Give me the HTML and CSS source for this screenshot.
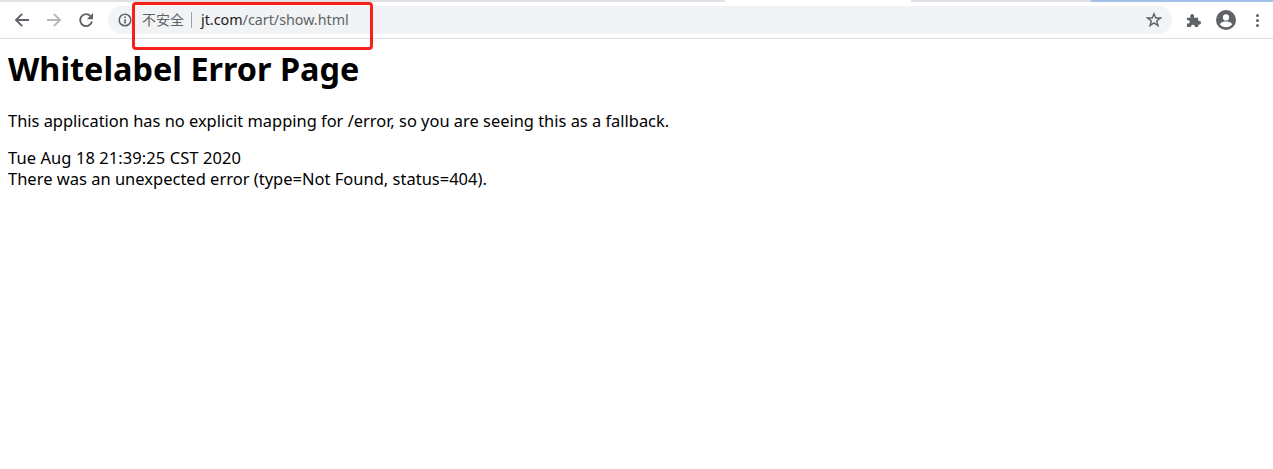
FILE: index.html
```html
<!DOCTYPE html>
<html lang="zh-CN">
<head>
    <meta charset="UTF-8">
    <title>Whitelabel Error Page</title>
    <link rel="stylesheet" href="styles.css">
</head>

<body>
    <div class="tab-strip">
        <div class="tab-grey tab-left"></div>
        <div class="tab-active"></div>
        <div class="tab-grey tab-mid"></div>
        <div class="tab-blue"></div>
    </div>

    <header class="toolbar">
        <div class="nav-buttons">
            <svg class="icon" viewBox="0 0 16 16"><path d="M15 8H2M8.2 1.8L2 8L8.2 14.2" fill="none" stroke="#5f6368" stroke-width="1.9"/></svg>
            <svg class="icon" viewBox="0 0 16 16"><path d="M1 8H14M7.8 1.8L14 8L7.8 14.2" fill="none" stroke="#b4b6b9" stroke-width="1.9"/></svg>
            <svg class="icon" viewBox="0 0 16 16"><path d="M14 9.4A6 6 0 1 1 12.4 3.9" fill="none" stroke="#5f6368" stroke-width="1.9"/><path d="M15 1V7.2H8.8Z" fill="#5f6368"/></svg>
        </div>

        <div class="omnibox">
            <svg class="info-icon" viewBox="0 0 14 14">
                <circle cx="7" cy="7" r="5.8" fill="none" stroke="#5f6368" stroke-width="1.5"/>
                <path d="M7 6.2V10.4M7 3.4V5" stroke="#5f6368" stroke-width="1.6"/>
            </svg>
            <span class="security-label">不安全</span>
            <span class="divider"></span>
            <span class="url"><span class="host">jt.com</span>/cart/show.html</span>
            <svg class="star-icon" viewBox="0 0 16 16"><path d="M8 1.8L9.8 6H14.4L10.7 8.9L12 13.6L8 10.9L4 13.6L5.3 8.9L1.6 6H6.2Z" fill="none" stroke="#5f6368" stroke-width="1.4"/></svg>
        </div>

        <div class="extra-buttons">
            <svg class="puzzle-icon" viewBox="0 0 16 16"><path d="M1 5H4.6C4.2 2.6 5 1 6.6 1S9 2.6 8.6 5H13V8.4C15 8 16 9 16 10.4S15 12.8 13 12.4V15H9.4C9.8 13.4 9 12.4 7.4 12.4S5 13.4 5.4 15H1V11.2C3 11.6 4 10.8 4 9.4S3 7.4 1 7.8Z" fill="#5f6368"/></svg>
            <svg class="avatar-icon" viewBox="0 0 20 20">
                <circle cx="10" cy="10" r="10" fill="#5f6368"/>
                <circle cx="10" cy="7.4" r="3.1" fill="#fff"/>
                <path d="M3.8 14.2C5.2 12 8 11.6 10 11.6S14.8 12 16.2 14.2C14.8 16.2 12.6 17.2 10 17.2S5.2 16.2 3.8 14.2Z" fill="#fff"/>
            </svg>
            <div class="menu-dots"><span></span><span></span><span></span></div>
        </div>
    </header>

    <main class="page">
        <h1>Whitelabel Error Page</h1>
        <p>This application has no explicit mapping for /error, so you are seeing this as a fallback.</p>
        <div class="timestamp">Tue Aug 18 21:39:25 CST 2020</div>
        <div>There was an unexpected error (type=Not Found, status=404).</div>
    </main>

    <div class="red-box"></div>
</body>
</html>
```

FILE: styles.css
```css
body {
    margin: 0;
    background-color: #fff;
    font-family: "Noto Sans", "Noto Sans CJK SC", sans-serif;
    color: #000;
    overflow: hidden;
}

.tab-strip {
    display: flex;
    height: 2px;
}

.tab-grey {
    background-color: #dee1e6;
}

.tab-left {
    width: 725px;
}

.tab-active {
    width: 186px;
    background-color: #fff;
}

.tab-mid {
    width: 180px;
}

.tab-blue {
    flex: 1;
    background-color: #a3c1e8;
}

.toolbar {
    display: flex;
    align-items: center;
    height: 36px;
    border-bottom: 1px solid #dadce0;
}

.nav-buttons {
    display: flex;
    align-items: center;
    gap: 16px;
    width: 108px;
    padding-left: 14px;
    box-sizing: border-box;
}

.icon {
    width: 16px;
    height: 16px;
}

.omnibox {
    display: flex;
    align-items: center;
    width: 1064px;
    height: 28px;
    box-sizing: border-box;
    padding: 0 10px;
    background-color: #f1f3f4;
    border-radius: 14px;
    font-size: 14px;
}

.info-icon {
    width: 14px;
    height: 14px;
    margin-right: 10px;
}

.security-label {
    margin-bottom: 2px;
    font-size: 14px;
    color: #5f6368;
}

.divider {
    width: 1px;
    height: 16px;
    margin: 0 9px 0 7px;
    background-color: #9aa0a6;
}

.url {
    margin-bottom: 2px;
    color: #5f6368;
    font-size: 14.3px;
}

.host {
    color: #202124;
}

.star-icon {
    width: 16px;
    height: 16px;
    margin-left: auto;
}

.extra-buttons {
    display: flex;
    align-items: center;
    margin-left: 14px;
}

.puzzle-icon {
    width: 15px;
    height: 15px;
}

.avatar-icon {
    width: 20px;
    height: 20px;
    margin-left: 15px;
}

.menu-dots {
    display: flex;
    flex-direction: column;
    gap: 2px;
    margin-left: 20px;
}

.menu-dots span {
    width: 3px;
    height: 3px;
    border-radius: 50%;
    background-color: #5f6368;
}

.page {
    padding: 0 8px;
    font-size: 16px;
}

h1 {
    margin: 8px 0 21px;
    font-size: 32.4px;
    font-weight: bold;
    line-height: 42px;
}

p {
    margin: 0 0 16px;
    font-size: 16.43px;
    line-height: 21px;
}

.page div {
    font-size: 16.5px;
    line-height: 21px;
}

.page .timestamp {
    letter-spacing: 0.07px;
}

.red-box {
    position: absolute;
    left: 132px;
    top: 2px;
    width: 235px;
    height: 42px;
    border: 3px solid #f5211a;
    border-radius: 4px;
}
```
